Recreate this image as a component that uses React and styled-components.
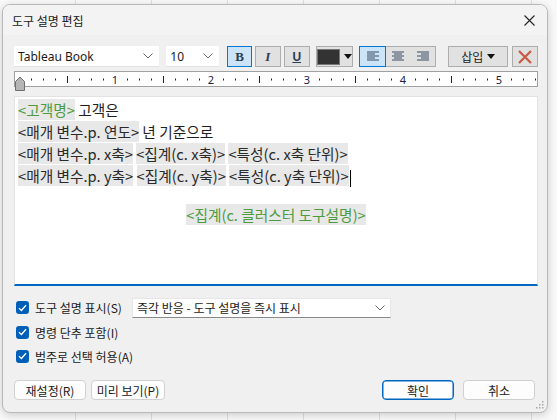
import React from "react";
import styled, { createGlobalStyle } from "styled-components";

const Global = createGlobalStyle`
  html, body {
    margin: 0;
    padding: 0;
    background: #f6f6f6;
    font-family: "Noto Sans CJK KR", "Noto Sans", sans-serif;
  }
`;

const Page = styled.div`
  width: 557px;
  height: 420px;
  padding: 4px 0 0 2px;
  box-sizing: border-box;
  background: repeating-linear-gradient(
    90deg,
    transparent 0 75px,
    #dedede 75px 76px
  ), #f9f9f9;
`;

const Dialog = styled.div`
  width: 546px;
  height: 409px;
  box-sizing: border-box;
  background: #f0f0f0;
  border: 1px solid #b9b9b9;
  border-radius: 8px;
  box-shadow: 0 2px 8px rgba(0, 0, 0, 0.18);
  display: flex;
  flex-direction: column;
  position: relative;
  overflow: hidden;
`;

const TitleBar = styled.div`
  height: 30px;
  flex: none;
  display: flex;
  align-items: center;
  justify-content: space-between;
  padding: 0 6px 0 9px;
  background: #f3f3f3;
`;

const Title = styled.div`
  font-size: 12px;
  color: #1a1a1a;
`;

const Close = styled.div`
  width: 24px;
  height: 24px;
  display: flex;
  align-items: center;
  justify-content: center;
`;

const Body = styled.div`
  flex: 1;
  display: flex;
  flex-direction: column;
  padding: 11px 9px 0 11px;
`;

const Toolbar = styled.div`
  display: flex;
  align-items: center;
  height: 21px;
`;

const Select = styled.div`
  width: ${(p) => p.$w}px;
  height: 21px;
  box-sizing: border-box;
  background: #fff;
  border-bottom: 1px solid #e2e2e2;
  margin-right: ${(p) => p.$mr || 0}px;
  display: flex;
  align-items: center;
  justify-content: space-between;
  padding: 0 6px 0 4px;
  font-family: "Noto Sans", "Noto Sans CJK KR", sans-serif;
  font-size: 12px;
  color: #1a1a1a;
`;

const ToolButton = styled.div`
  width: ${(p) => p.$w || 26}px;
  height: 21px;
  box-sizing: border-box;
  border: 1px solid ${(p) => (p.$on ? "#0078d4" : "#adadad")};
  background: ${(p) => (p.$on ? "#cce4f7" : "#e1e1e1")};
  margin-right: ${(p) => p.$mr || 0}px;
  display: flex;
  align-items: center;
  justify-content: center;
  gap: 4px;
  font-size: 12px;
  color: #222;
`;

const Group = styled.div`
  display: flex;
  margin-right: ${(p) => p.$mr || 0}px;
  border: 1px solid #adadad;
  background: #e1e1e1;
  height: 21px;
  box-sizing: border-box;
`;

const GroupItem = styled.div`
  width: 25px;
  height: 19px;
  box-sizing: border-box;
  display: flex;
  align-items: center;
  justify-content: center;
  background: ${(p) => (p.$on ? "#cce4f7" : "transparent")};
  outline: ${(p) => (p.$on ? "1px solid #0078d4" : "none")};
`;

const Glyph = styled.span`
  font-family: "Liberation Serif", serif;
  font-size: 13px;
  font-weight: ${(p) => (p.$b ? 700 : 400)};
  font-style: ${(p) => (p.$i ? "italic" : "normal")};
  text-decoration: ${(p) => (p.$u ? "underline" : "none")};
  color: #2b3a55;
  ${(p) => p.$u && "font-family: 'Liberation Sans', sans-serif; font-size: 12px; font-weight: 700;"}
`;

const Swatch = styled.div`
  width: 21px;
  height: 14px;
  background: #333;
  border: 1px solid #777;
`;

const Spacer = styled.div`
  flex: 1;
`;

const Ruler = styled.div`
  margin-top: 4px;
  height: 16px;
  box-sizing: border-box;
  background: #fff;
  border: 1px solid #a0a0a0;
  position: relative;
`;

const Editor = styled.div`
  margin-top: 9px;
  height: 190px;
  box-sizing: border-box;
  background: #fff;
  border: 1px solid #e3e3e3;
  border-bottom: 2px solid #0067c0;
  padding: 2px 3px;
  font-size: 14.7px;
  color: #1e1e1e;
`;

const Line = styled.div`
  height: 22px;
  line-height: 22px;
  white-space: pre;
  text-align: ${(p) => (p.$center ? "center" : "left")};
  ${(p) => p.$gap && `margin-top: ${p.$gap}px;`}
`;

const Token = styled.span`
  display: inline-block;
  height: 21px;
  line-height: 21px;
  background: #e8e8e8;
  color: ${(p) => (p.$green ? "#4d9b3f" : "#2a2a2a")};
`;

const Caret = styled.span`
  display: inline-block;
  width: 1px;
  height: 17px;
  background: #000;
  vertical-align: middle;
  margin-left: 1px;
`;

const Options = styled.div`
  margin-top: 9px;
  display: flex;
  flex-direction: column;
`;

const OptionRow = styled.div`
  height: ${(p) => p.$h || 24}px;
  display: flex;
  align-items: center;
`;

const Check = styled.div`
  width: 13px;
  height: 13px;
  border-radius: 3px;
  background: #005fb8;
  display: flex;
  align-items: center;
  justify-content: center;
  margin: 0 6px 0 2px;
`;

const Label = styled.span`
  font-size: 12px;
  color: #1a1a1a;
  width: ${(p) => (p.$w ? `${p.$w}px` : "auto")};
`;

const Dropdown = styled.div`
  width: 259px;
  height: 20px;
  box-sizing: border-box;
  background: #fff;
  border: 1px solid #e6e6e6;
  border-bottom-color: #8a8a8a;
  display: flex;
  align-items: center;
  justify-content: space-between;
  padding: 0 5px 0 4px;
  font-size: 12px;
  color: #1a1a1a;
`;

const Footer = styled.div`
  margin-top: 12px;
  display: flex;
  align-items: center;
  gap: 5px;
`;

const Button = styled.div`
  width: ${(p) => p.$w || 72}px;
  height: 20px;
  box-sizing: border-box;
  background: #fdfdfd;
  border: 1px solid ${(p) => (p.$primary ? "#0067c0" : "#d0d0d0")};
  box-shadow: ${(p) => (p.$primary ? "inset 0 0 0 0.5px #0067c0" : "none")};
  border-radius: 4px;
  display: flex;
  align-items: center;
  justify-content: center;
  font-size: 12px;
  color: #1a1a1a;
  margin-left: ${(p) => p.$ml || 0}px;
`;

const Grip = styled.svg`
  position: absolute;
  right: 3px;
  bottom: 3px;
`;

const Chevron = () => (
  <svg width="10" height="6" viewBox="0 0 10 6">
    <path d="M0.5 0.5 L5 5 L9.5 0.5" fill="none" stroke="#6a6a6a" strokeWidth="1" />
  </svg>
);

const AlignIcon = ({ kind }) => {
  const widths = [12, 8, 12, 8, 12];
  return (
    <svg width="14" height="11" viewBox="0 0 14 11">
      {widths.map((w, i) => {
        let x = 1;
        if (kind === "center") x = 1 + (12 - w) / 2;
        if (kind === "right") x = 13 - w;
        return <rect key={i} x={x} y={i * 2 + 0.5} width={w} height="1" fill="#3a4a66" />;
      })}
    </svg>
  );
};

function RulerMarks() {
  const items = [];
  for (let i = 1; i < 44; i++) {
    const x = 4 + i * 12;
    if (x > 520) break;
    if (i % 8 === 0) {
      items.push(
        <text key={i} x={x} y="11.5" fontSize="11" textAnchor="middle" fill="#1b2240" fontFamily="Noto Sans, sans-serif">
          {i / 8}
        </text>
      );
    } else if (i % 4 === 0) {
      items.push(<rect key={i} x={x} y="4" width="1" height="7" fill="#222" />);
    } else {
      items.push(<rect key={i} x={x} y="6.5" width="1" height="2" fill="#222" />);
    }
  }
  return (
    <svg width="521" height="22" viewBox="0 0 521 22" style={{ position: "absolute", left: 0, top: 0, overflow: "visible" }}>
      {items}
      <path d="M0.5 9.5 L5 5 L9.5 9.5 L9.5 18.5 L0.5 18.5 Z" fill="#b5b5b5" stroke="#6e6e6e" strokeWidth="1" />
    </svg>
  );
}

const CheckMark = () => (
  <svg width="9" height="8" viewBox="0 0 9 8">
    <path d="M1 4.2 L3.4 6.5 L8 1.3" fill="none" stroke="#fff" strokeWidth="1.3" />
  </svg>
);

export default function App() {
  return (
    <>
      <Global />
      <Page>
        <Dialog>
          <TitleBar>
            <Title>도구 설명 편집</Title>
            <Close>
              <svg width="11" height="11" viewBox="0 0 11 11">
                <path d="M0.5 0.5 L10.5 10.5 M10.5 0.5 L0.5 10.5" stroke="#222" strokeWidth="1.1" />
              </svg>
            </Close>
          </TitleBar>
          <Body>
            <Toolbar>
              <Select $w={146} $mr={7}>
                <span>Tableau Book</span>
                <Chevron />
              </Select>
              <Select $w={53} $mr={8}>
                <span>10</span>
                <Chevron />
              </Select>
              <ToolButton $on $w={25} $mr={3}>
                <Glyph $b>B</Glyph>
              </ToolButton>
              <ToolButton $mr={3}>
                <Glyph $b $i>I</Glyph>
              </ToolButton>
              <ToolButton $mr={6}>
                <Glyph $u>U</Glyph>
              </ToolButton>
              <ToolButton $w={38} $mr={6}>
                <Swatch />
                <svg width="8" height="5" viewBox="0 0 8 5">
                  <path d="M0 0 L8 0 L4 5 Z" fill="#111" />
                </svg>
              </ToolButton>
              <Group $mr={12}>
                <GroupItem $on>
                  <AlignIcon kind="left" />
                </GroupItem>
                <GroupItem>
                  <AlignIcon kind="center" />
                </GroupItem>
                <GroupItem>
                  <AlignIcon kind="right" />
                </GroupItem>
              </Group>
              <ToolButton $w={60} $mr={4}>
                <span>삽입</span>
                <svg width="8" height="5" viewBox="0 0 8 5">
                  <path d="M0 0 L8 0 L4 5 Z" fill="#111" />
                </svg>
              </ToolButton>
              <ToolButton $w={26}>
                <svg width="14" height="14" viewBox="0 0 14 14">
                  <path d="M1 1 L13 13 M13 1 L1 13" stroke="#c95a42" strokeWidth="2.2" />
                </svg>
              </ToolButton>
              <Spacer />
            </Toolbar>
            <Ruler>
              <RulerMarks />
            </Ruler>
            <Editor>
              <Line>
                <Token $green>&lt;고객명&gt;</Token> 고객은
              </Line>
              <Line>
                <Token>&lt;매개 변수.p. 연도&gt;</Token> 년 기준으로
              </Line>
              <Line>
                <Token>&lt;매개 변수.p. x축&gt;</Token> <Token>&lt;집계(c. x축)&gt;</Token>{" "}
                <Token>&lt;특성(c. x축 단위)&gt;</Token>
              </Line>
              <Line>
                <Token>&lt;매개 변수.p. y축&gt;</Token> <Token>&lt;집계(c. y축)&gt;</Token>{" "}
                <Token>&lt;특성(c. y축 단위)&gt;</Token>
                <Caret />
              </Line>
              <Line $center $gap={17}>
                <Token $green>&lt;집계(c. 클러스터 도구설명)&gt;</Token>
              </Line>
            </Editor>
            <Options>
              <OptionRow $h={25}>
                <Check>
                  <CheckMark />
                </Check>
                <Label $w={97}>도구 설명 표시(S)</Label>
                <Dropdown>
                  <span>즉각 반응 - 도구 설명을 즉시 표시</span>
                  <Chevron />
                </Dropdown>
              </OptionRow>
              <OptionRow>
                <Check>
                  <CheckMark />
                </Check>
                <Label>명령 단추 포함(I)</Label>
              </OptionRow>
              <OptionRow>
                <Check>
                  <CheckMark />
                </Check>
                <Label>범주로 선택 허용(A)</Label>
              </OptionRow>
            </Options>
            <Footer>
              <Button $w={72}>재설정(R)</Button>
              <Button $w={74}>미리 보기(P)</Button>
              <Button $primary $w={72} $ml={212}>
                확인
              </Button>
              <Button $w={72} $ml={4}>
                취소
              </Button>
            </Footer>
          </Body>
          <Grip width="9" height="9" viewBox="0 0 9 9">
            {[
              [7, 1],
              [4, 4],
              [7, 4],
              [1, 7],
              [4, 7],
              [7, 7],
            ].map(([x, y], i) => (
              <rect key={i} x={x} y={y} width="1.5" height="1.5" fill="#a8a8a8" />
            ))}
          </Grip>
        </Dialog>
      </Page>
    </>
  );
}
